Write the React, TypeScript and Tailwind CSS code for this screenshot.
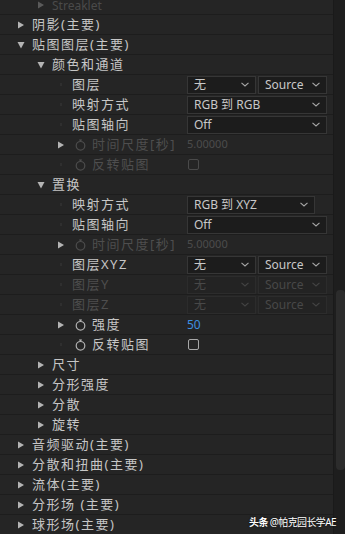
import React from "react";

const FONT = { fontFamily: '"Noto Sans", "Noto Sans CJK SC", sans-serif' };

function Tri({ dir, dim }: { dir: "right" | "down"; dim?: boolean }) {
  const c = dim ? "#5a5a5a" : "#b4b4b4";
  return (
    <svg width="8" height="8" viewBox="0 0 8 8" className="shrink-0">
      {dir === "right" ? (
        <polygon points="1,0.5 7,4 1,7.5" fill={c} />
      ) : (
        <polygon points="0.5,1 7.5,1 4,7.5" fill={c} />
      )}
    </svg>
  );
}

function Watch({ dim }: { dim?: boolean }) {
  const c = dim ? "#4c4c4c" : "#b0b0b0";
  return (
    <svg width="11" height="12" viewBox="0 0 11 12" className="shrink-0">
      <circle cx="5.5" cy="6.8" r="4.3" fill="none" stroke={c} strokeWidth="1.2" />
      <line x1="5.5" y1="0.8" x2="5.5" y2="2.6" stroke={c} strokeWidth="1.2" />
      <line x1="4" y1="1" x2="7" y2="1" stroke={c} strokeWidth="1" />
    </svg>
  );
}

function Chev({ dim }: { dim?: boolean }) {
  return (
    <svg width="8" height="5" viewBox="0 0 8 5" className="shrink-0">
      <polyline points="0.5,0.8 4,4 7.5,0.8" fill="none" stroke={dim ? "#444" : "#a8a8a8"} strokeWidth="1.1" />
    </svg>
  );
}

function Drop({ text, w, dim }: { text: string; w: string; dim?: boolean }) {
  return (
    <div
      className={`${w} h-[18px] flex items-center justify-between pl-[6px] pr-[6px] border ${
        dim ? "border-[#2c2c2c] bg-[#232323] text-[#484848]" : "border-[#363636] bg-[#1c1c1c] text-[#c8c8c8]"
      } text-[12px] leading-none`}
    >
      <span>{text}</span>
      <Chev dim={dim} />
    </div>
  );
}

function Check({ dim }: { dim?: boolean }) {
  return (
    <div
      className={`ml-[1px] w-[11px] h-[11px] rounded-[2px] border-[1.5px] ${
        dim ? "border-[#4a4a4a]" : "border-[#a8a8a8]"
      }`}
    />
  );
}

type RowProps = {
  level: 1 | 2 | 3;
  arrow?: "right" | "down" | "none";
  watch?: boolean;
  label: string;
  dim?: boolean;
  value?: React.ReactNode;
};

const PAD: Record<number, string> = { 1: "pl-[17px]", 2: "pl-[37px]", 3: "pl-[57px]" };

function Row({ level, arrow = "none", watch, label, dim, value }: RowProps) {
  return (
    <div className="h-[20px] flex items-center border-b border-[#1d1d1d] shrink-0">
      <div className={`w-[187px] shrink-0 flex items-center ${PAD[level]}`}>
        <div className={`${watch ? "w-[18px]" : "w-[15px]"} shrink-0 flex items-center`}>
          {arrow === "none" ? (
            <div className="ml-[3px] w-[2px] h-[3px] bg-[#2f2f2f]" />
          ) : (
            <Tri dir={arrow} />
          )}
        </div>
        {watch && (
          <div className="w-[17px] shrink-0 flex items-center">
            <Watch dim={dim} />
          </div>
        )}
        <span
          className={`text-[13px] leading-none tracking-[1.5px] whitespace-nowrap ${
            dim ? "text-[#4e4e4e]" : "text-[#c6c6c6]"
          }`}
        >
          {label}
        </span>
      </div>
      <div className="flex-1 flex items-center">{value}</div>
    </div>
  );
}

function DualDrop({ dim }: { dim?: boolean }) {
  return (
    <div className="flex gap-[2px]">
      <Drop text="无" w="w-[69px]" dim={dim} />
      <Drop text="Source" w="w-[69px]" dim={dim} />
    </div>
  );
}

export default function App() {
  return (
    <div className="w-[345px] h-[534px] overflow-hidden bg-[#252525] relative flex" style={FONT}>
      <div className="flex-1 flex flex-col -mt-[5px]">
        <div className="h-[20px] flex items-center border-b border-[#1d1d1d] shrink-0 pl-[37px]">
          <div className="w-[15px] flex items-center">
            <Tri dir="right" dim />
          </div>
          <span className="text-[12px] leading-none text-[#4a4a4a] pt-[3px]">Streaklet</span>
        </div>
        <Row level={1} arrow="right" label="阴影(主要)" />
        <Row level={1} arrow="down" label="贴图图层(主要)" />
        <Row level={2} arrow="down" label="颜色和通道" />
        <Row level={3} label="图层" value={<DualDrop />} />
        <Row level={3} label="映射方式" value={<Drop text="RGB 到 RGB" w="w-[140px]" />} />
        <Row level={3} label="贴图轴向" value={<Drop text="Off" w="w-[140px]" />} />
        <Row
          level={3}
          arrow="right"
          watch
          dim
          label="时间尺度[秒]"
          value={<span className="text-[11px] text-[#4c4c4c]">5.00000</span>}
        />
        <Row level={3} watch dim label="反转贴图" value={<Check dim />} />
        <Row level={2} arrow="down" label="置换" />
        <Row level={3} label="映射方式" value={<Drop text="RGB 到 XYZ" w="w-[128px]" />} />
        <Row level={3} label="贴图轴向" value={<Drop text="Off" w="w-[140px]" />} />
        <Row
          level={3}
          arrow="right"
          watch
          dim
          label="时间尺度[秒]"
          value={<span className="text-[11px] text-[#4c4c4c]">5.00000</span>}
        />
        <Row level={3} label="图层XYZ" value={<DualDrop />} />
        <Row level={3} dim label="图层Y" value={<DualDrop dim />} />
        <Row level={3} dim label="图层Z" value={<DualDrop dim />} />
        <Row
          level={3}
          arrow="right"
          watch
          label="强度"
          value={<span className="text-[12px] text-[#3d8fe0]">50</span>}
        />
        <Row level={3} watch label="反转贴图" value={<Check />} />
        <Row level={2} arrow="right" label="尺寸" />
        <Row level={2} arrow="right" label="分形强度" />
        <Row level={2} arrow="right" label="分散" />
        <Row level={2} arrow="right" label="旋转" />
        <Row level={1} arrow="right" label="音频驱动(主要)" />
        <Row level={1} arrow="right" label="分散和扭曲(主要)" />
        <Row level={1} arrow="right" label="流体(主要)" />
        <Row level={1} arrow="right" label="分形场 (主要)" />
        <Row level={1} arrow="right" label="球形场(主要)" />
      </div>
      <div className="w-[12px] shrink-0 bg-[#1e1e1e] border-l border-[#1a1a1a] flex flex-col">
        <div className="mt-[290px] ml-[2px] w-[9px] h-[180px] rounded-[4px] bg-[#2c2c2c]" />
      </div>
      <div className="absolute right-[9px] bottom-[7px] text-[10px] leading-none text-white tracking-[-0.6px] [text-shadow:0_0_2px_rgba(0,0,0,0.8)]">
        <span className="font-bold">头条</span> @帕克园长学AE
      </div>
    </div>
  );
}
